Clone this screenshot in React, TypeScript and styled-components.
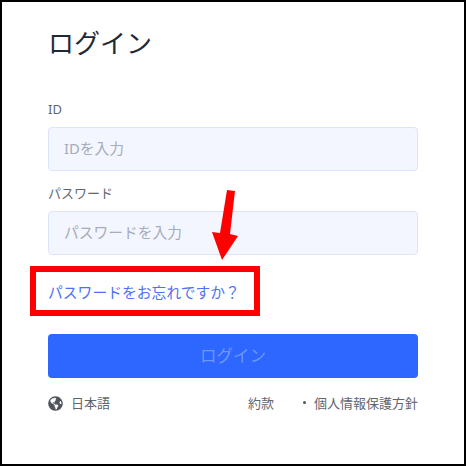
// App.tsx
import React from "react";
import styled, { createGlobalStyle } from "styled-components";
import { FaGlobeAmericas } from "react-icons/fa";

const GlobalStyle = createGlobalStyle`
  html, body {
    margin: 0;
    padding: 0;
    background: #fff;
  }
  * {
    box-sizing: border-box;
  }
`;

const Frame = styled.div`
  position: relative;
  width: 466px;
  height: 466px;
  border: 2px solid #000;
  padding: 24px 46px 0;
  background: #fff;
  font-family: "Noto Sans", "Noto Sans CJK JP", sans-serif;
`;

const Title = styled.h1`
  margin: 0 0 39px;
  height: 34px;
  font-size: 26px;
  line-height: 34px;
  font-weight: 400;
  color: #1f2937;
`;

const Field = styled.div`
  display: flex;
  flex-direction: column;
  margin-bottom: 12px;
`;

const Label = styled.label`
  height: 28px;
  padding-top: 1px;
  font-size: 13px;
  line-height: 18px;
  color: #5f6670;
`;

const TextBox = styled.input`
  width: 370px;
  height: 44px;
  padding: 0 14px 2px 15px;
  border: 1px solid #dbe4fb;
  border-radius: 4px;
  background: #f3f6ff;
  font-family: inherit;
  font-size: 14.75px;
  outline: none;

  &::placeholder {
    color: #a6acb8;
    opacity: 1;
  }
`;

const ForgotLink = styled.a`
  display: block;
  margin-top: 26px;
  height: 22px;
  font-size: 14.8px;
  line-height: 22px;
  color: #4f72f5;
  text-decoration: none;
`;

const LoginButton = styled.button`
  display: block;
  width: 370px;
  height: 44px;
  margin-top: 31px;
  padding: 0 0 3px;
  border: none;
  border-radius: 4px;
  background: #2d67ff;
  color: #6f97f8;
  font-family: inherit;
  font-size: 16.5px;
`;

const Footer = styled.div`
  display: flex;
  align-items: center;
  justify-content: space-between;
  height: 20px;
  margin-top: 14px;
  font-size: 13px;
  color: #5f6670;
`;

const Language = styled.div`
  display: flex;
  align-items: center;
  gap: 8px;

  svg {
    width: 15px;
    height: 15px;
    margin-top: 2px;
    color: #50545c;
  }
`;

const FooterLinks = styled.div`
  display: flex;
  align-items: center;
`;

const PrivacyLink = styled.span`
  display: flex;
  align-items: center;
  margin-left: 29px;

  &::before {
    content: "";
    width: 3px;
    height: 3px;
    margin-right: 8px;
    border-radius: 50%;
    background: #50545c;
  }
`;

/* annotation drawn over the form */
const Highlight = styled.div`
  position: absolute;
  left: 28px;
  top: 264px;
  width: 230px;
  height: 50px;
  border: 6px solid #ff0000;
`;

const Arrow = styled.svg`
  position: absolute;
  left: 208px;
  top: 186px;
  width: 30px;
  height: 74px;
`;

export default function App() {
  return (
    <>
      <GlobalStyle />
      <Frame>
        <Title>ログイン</Title>
        <Field>
          <Label>ID</Label>
          <TextBox placeholder="IDを入力" />
        </Field>
        <Field>
          <Label>パスワード</Label>
          <TextBox placeholder="パスワードを入力" />
        </Field>
        <ForgotLink>パスワードをお忘れですか？</ForgotLink>
        <LoginButton>ログイン</LoginButton>
        <Footer>
          <Language>
            <FaGlobeAmericas />
            日本語
          </Language>
          <FooterLinks>
            <span>約款</span>
            <PrivacyLink>個人情報保護方針</PrivacyLink>
          </FooterLinks>
        </Footer>
        <Highlight />
        <Arrow viewBox="0 0 30 74">
          <polygon points="17,2 25,3 20,46 28,48 12,72 2,44 10,45" fill="#ff0000" />
        </Arrow>
      </Frame>
    </>
  );
}
